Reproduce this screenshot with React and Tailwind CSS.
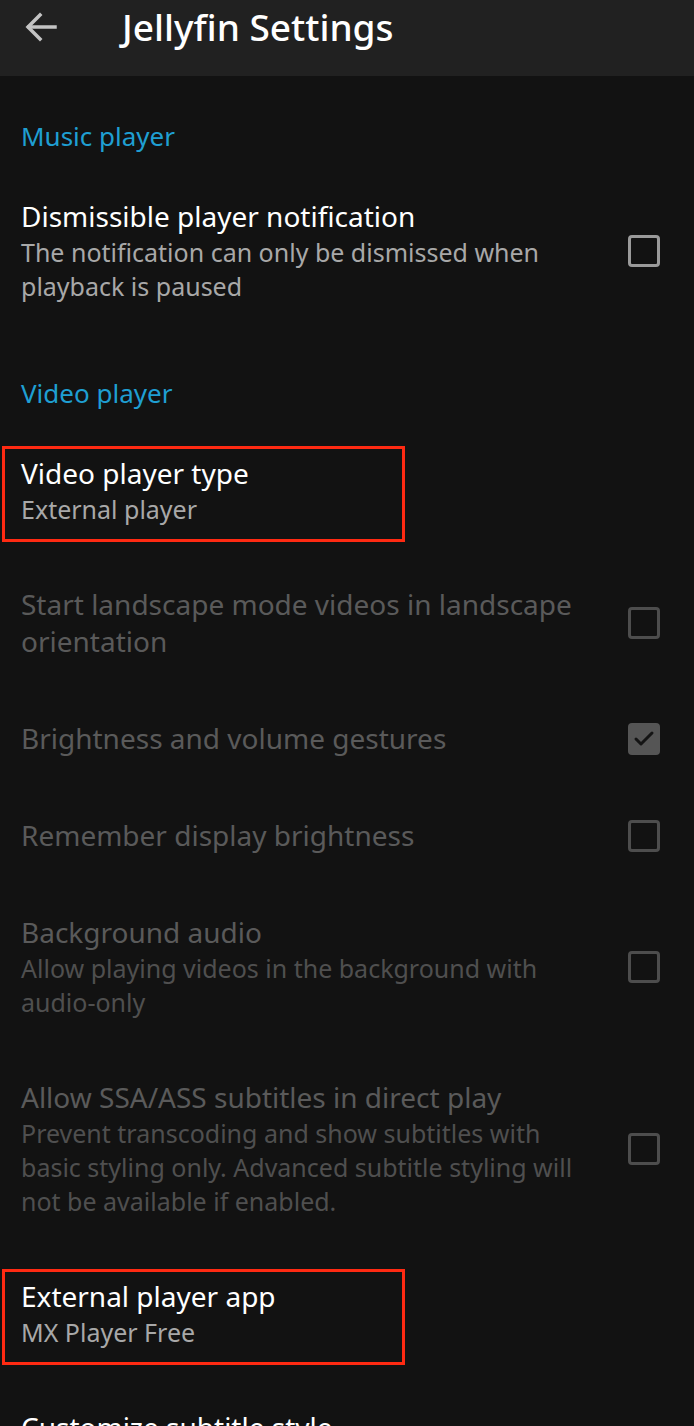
import { Check } from 'lucide-react';

// lineas de cada ajuste, con los saltos tal cual aparecen en la captura
const musica = [
  {
    titulo: ['Dismissible player notification'],
    resumen: ['The notification can only be dismissed when', 'playback is paused'],
    check: false,
  },
];

const video = [
  { titulo: ['Video player type'], resumen: ['External player'], marcado: true },
  { titulo: ['Start landscape mode videos in landscape', 'orientation'], check: false, off: true },
  { titulo: ['Brightness and volume gestures'], check: true, off: true },
  { titulo: ['Remember display brightness'], check: false, off: true },
  {
    titulo: ['Background audio'],
    resumen: ['Allow playing videos in the background with', 'audio-only'],
    check: false,
    off: true,
  },
  {
    titulo: ['Allow SSA/ASS subtitles in direct play'],
    resumen: [
      'Prevent transcoding and show subtitles with',
      'basic styling only. Advanced subtitle styling will',
      'not be available if enabled.',
    ],
    check: false,
    off: true,
  },
  { titulo: ['External player app'], resumen: ['MX Player Free'], marcado: true },
  { titulo: ['Customize subtitle style'] },
];

function Casilla({ activo, off }) {
  if (activo) {
    return (
      <div className={`w-[32px] h-[32px] rounded-[4px] flex items-center justify-center ${off ? 'bg-[#555555]' : 'bg-[#1f9fd2]'}`}>
        <Check size={24} strokeWidth={3} className="text-[#141414]" />
      </div>
    );
  }
  return (
    <div className={`w-[32px] h-[32px] rounded-[4px] border-[3px] ${off ? 'border-[#4d4d4d]' : 'border-[#9a9a9a]'}`} />
  );
}

function Ajuste({ item }) {
  const { titulo, resumen, check, off, marcado } = item;
  return (
    <div className="relative flex items-center px-[21px] py-[30px]">
      {marcado && (
        <span className="absolute left-[2px] top-[21px] w-[403px] h-[96px] border-[3px] border-[#ff2a12]" />
      )}
      <div className="flex-1">
        {titulo.map((t) => (
          <div key={t} className={`text-[28px] leading-[37px] whitespace-nowrap ${off ? 'text-[#5a5a5a]' : 'text-white'}`}>
            {t}
          </div>
        ))}
        {resumen && resumen.map((r) => (
          <div key={r} className={`text-[25px] leading-[34px] whitespace-nowrap ${off ? 'text-[#4f4f4f]' : 'text-[#a8a8a8]'}`}>
            {r}
          </div>
        ))}
      </div>
      {check !== undefined && (
        <div className="mr-[13px]">
          <Casilla activo={check} off={off} />
        </div>
      )}
    </div>
  );
}

function Seccion({ nombre }) {
  return (
    <div className="px-[21px] pt-[44px] pb-[16px] text-[26px] leading-[32px] text-[#1f9fd2]">
      {nombre}
    </div>
  );
}

export default function App() {
  return (
    <div className="w-[694px] h-[1426px] overflow-hidden bg-[#121212]" style={{ fontFamily: '"Noto Sans", sans-serif' }}>
      <div className="h-[76px] bg-[#212121] flex items-start">
        <div className="flex items-center h-[54px]">
          <svg className="ml-[25px]" width="32" height="30" viewBox="0 0 32 30" fill="none" stroke="#c4c4c4" strokeWidth="3.5" strokeLinecap="square">
            <path d="M30 15H4" />
            <path d="M15 3L3 15l12 12" />
          </svg>
          <h1 className="ml-[65px] text-[37px] leading-[40px] font-medium text-white">Jellyfin Settings</h1>
        </div>
      </div>

      <Seccion nombre="Music player" />
      {musica.map((m) => (
        <Ajuste key={m.titulo[0]} item={m} />
      ))}

      <Seccion nombre="Video player" />
      {video.map((v) => (
        <Ajuste key={v.titulo[0]} item={v} />
      ))}
    </div>
  );
}
